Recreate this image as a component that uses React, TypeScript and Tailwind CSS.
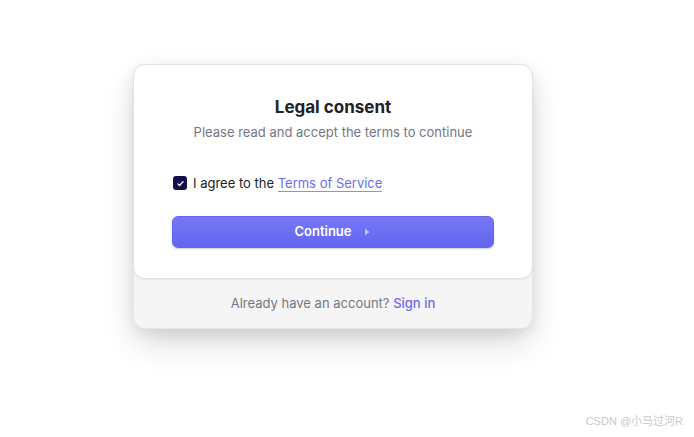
import React from 'react';

export default function App() {
  return (
    <div
      className="relative w-[694px] h-[437px] bg-white overflow-hidden"
      style={{ fontFamily: 'Inter, "Noto Sans", sans-serif' }}
    >
      <div className="pt-[64px] pl-[133px]">
        {/* Card */}
        <div className="w-[400px] rounded-xl bg-[#f5f5f5] border border-[#e6e6e6] shadow-[0_5px_15px_rgba(0,0,0,0.08),0_15px_35px_-5px_rgba(25,28,33,0.2)]">
          <div className="-mx-px -mt-px rounded-xl bg-white border border-[#e3e3e3] shadow-[0_1px_2px_rgba(0,0,0,0.06)] px-[38px] pt-[32px] pb-[30px]">
            <h1 className="text-center text-[17px] leading-[20px] font-bold text-[#212126]">Legal consent</h1>
            <p className="mt-[6px] text-center text-[13px] leading-[18px] text-[#747686]">
              Please read and accept the terms to continue
            </p>

            {/* Checkbox */}
            <label className="mt-[33px] flex items-center gap-[6px] pl-px text-[13px] leading-[18px] text-[#212126]">
              <span className="flex h-[14px] w-[14px] items-center justify-center rounded-[3px] bg-[#120e4c]">
                <svg viewBox="0 0 12 12" className="h-[9px] w-[9px]" fill="none">
                  <path d="M2.5 6.5l2.2 2.2L9.5 3.5" stroke="white" strokeWidth="1.8" strokeLinecap="round" strokeLinejoin="round" />
                </svg>
              </span>
              <span>
                I agree to the{' '}
                <a className="text-[#6c6cf1] border-b border-[#8b8bf3]">Terms of Service</a>
              </span>
            </label>

            {/* Button */}
            <button className="mt-[24px] flex h-[32px] w-full items-center justify-center gap-[10px] rounded-md border border-[#6366f1] bg-gradient-to-b from-[#7678f6] to-[#6366f1] text-[13px] font-semibold text-white shadow-[0_1px_2px_rgba(0,0,0,0.2)]">
              <span>Continue</span>
              <svg viewBox="0 0 10 10" className="h-[10px] w-[10px]">
                <path d="M3 1.5l4.5 3.5-4.5 3.5z" fill="rgba(255,255,255,0.55)" />
              </svg>
            </button>
          </div>

          {/* Footer */}
          <div className="flex h-[49px] items-center justify-center text-[13px] text-[#747686]">
            <span>
              Already have an account?{' '}
              <a className="font-medium text-[#6c6cf1]">Sign in</a>
            </span>
          </div>
        </div>
      </div>

      {/* Watermark */}
      <div
        className="absolute right-[11px] bottom-[8px] text-[11px] text-[#c8c8c8]"
        style={{ fontFamily: '"Liberation Sans", "Noto Sans CJK SC", sans-serif' }}
      >
        CSDN @小马过河R
      </div>
    </div>
  );
}
